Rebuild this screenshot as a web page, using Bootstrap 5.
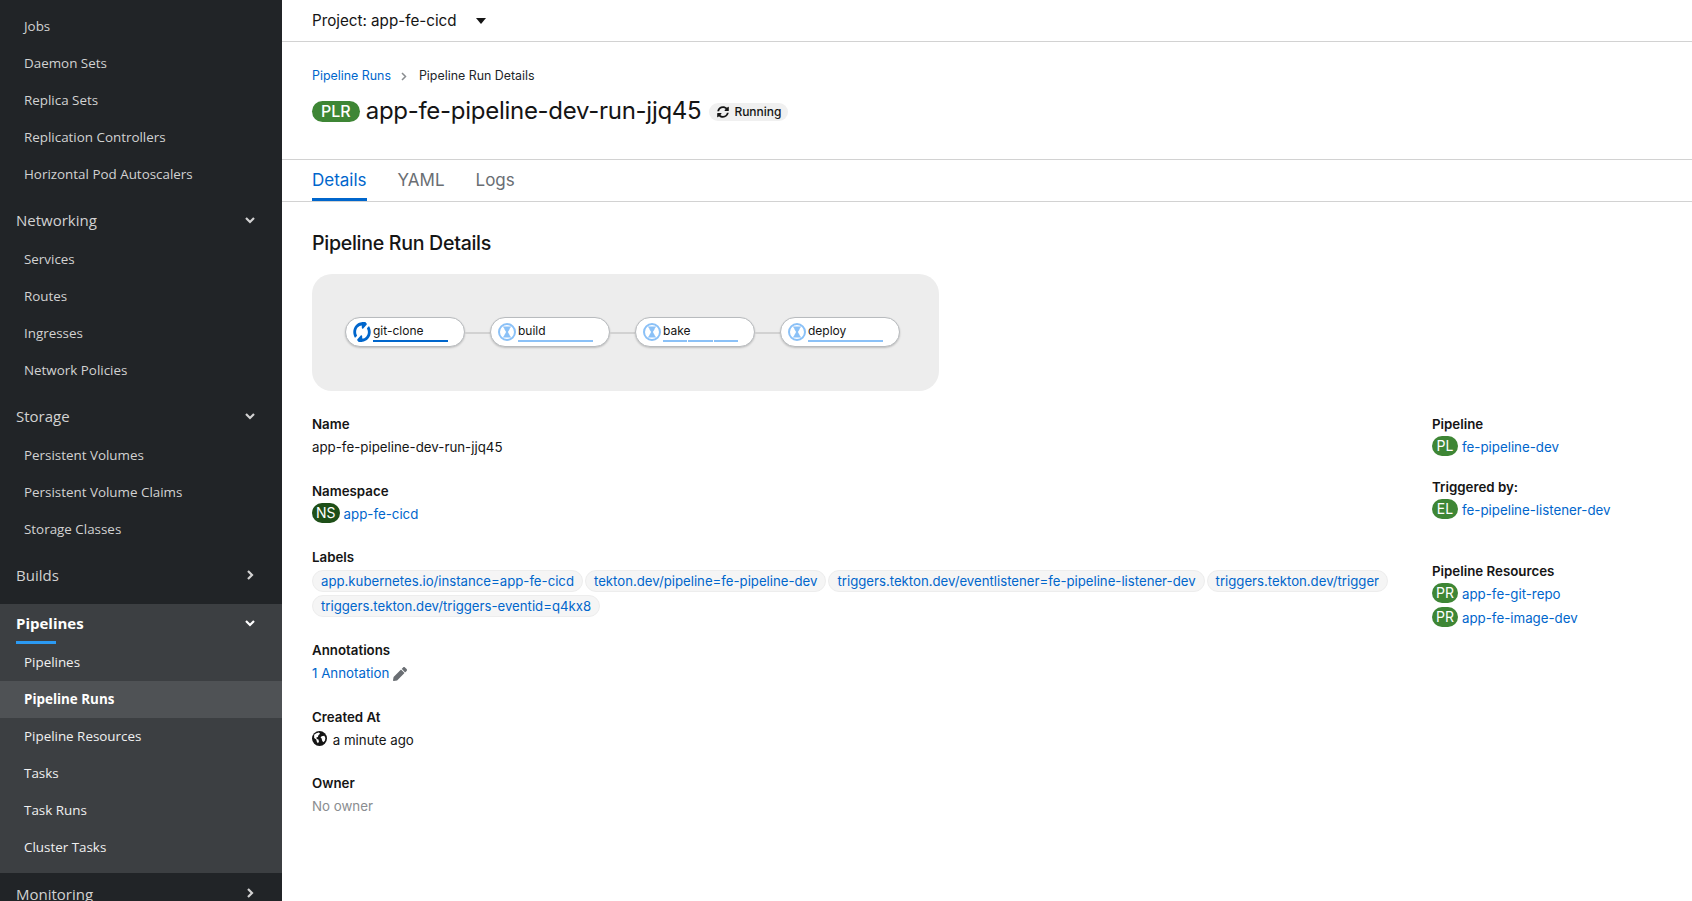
<!DOCTYPE html>
<html lang="en"><head><meta charset="utf-8"><title>Pipeline Run Details</title>
<link href="https://cdn.jsdelivr.net/npm/bootstrap@5.3.0/dist/css/bootstrap.min.css" rel="stylesheet">
<style>
html,body{height:901px;overflow:hidden}
body{font-family:"Inter","Liberation Sans",sans-serif;font-size:13.3px;color:#151515;background:#fff}
a{color:#06c;text-decoration:none}
.shell{height:901px}
.side{width:282px;flex:none;background:#212427;color:#d2d2d2;font-family:"Open Sans","Liberation Sans",sans-serif;overflow:hidden;height:901px;padding-top:8px}
.side-item{display:block;height:37px;line-height:37px;padding-left:24px;font-size:13.4px;color:#d2d2d2}
.side-head{display:flex;justify-content:space-between;align-items:center;padding:0 26px 0 16px;font-size:15px;color:#d2d2d2}
.side-head svg{margin-top:-2px}
.h-net{height:48px;padding-top:7px;padding-bottom:0}
.h-end{height:42px;padding-top:0}
.group-on{background:#3c3f42;padding-bottom:7.5px;margin-top:7.5px}
.group-on .side-item{color:#f0f0f0}
.group-on .side-head{color:#fff;font-weight:700;height:40px}
.rule-on{width:40px;height:3px;background:#2b9af3;margin:-3px 0 0 16px}
.side-item.is-on{background:#4f5255;color:#fff;font-weight:700}
.main{flex:1;min-width:0}
.proj{height:42px;border-bottom:1px solid #d2d2d2;padding:1px 30px 0;font-size:15.2px;gap:19px}
.crumb{margin:0;padding:15px 30px 0;font-size:12.4px;height:54px;align-items:center}
.crumb .breadcrumb-item+.breadcrumb-item::before{content:none}
.crumb .breadcrumb-item+.breadcrumb-item{padding-left:12px}
.sep{color:#8a8d90;margin-left:10px}
.ttl{padding:0 30px;height:63px;gap:6px}
.ttl-text{font-size:24px;line-height:30px;margin:0;font-weight:400;letter-spacing:-.28px}
.plr{background:#3e8635;border-radius:20px;color:#fff;font-size:16px;line-height:21px;padding:0 9px;font-weight:500;margin-top:5px}
.state{background:#f0f0f0;border-radius:12px;font-size:12px;font-weight:500;height:18px;padding:0 7px 0 8px;gap:5px;margin:7px 0 0 2px}
.tabbar{border-top:1px solid #d2d2d2;border-bottom:1px solid #d2d2d2;height:43px;padding:0 30px;gap:31px}
.tabbar .nav-link{padding:0;border:0;font-size:17px;line-height:40px;height:41px;color:#6a6e73}
.tabbar .nav-link.active{color:#06c;border-bottom:3px solid #06c;background:none}
.body-wrap{padding:26px 30px 0}
.sect{font-size:19.6px;line-height:30px;margin:0 0 16px;font-weight:500;letter-spacing:-.3px}
.graph{width:627px;height:117px;background:#ededed;border-radius:20px;padding-left:33px;margin-bottom:22px}
.task{width:120px;height:30px;background:#fff;border:1px solid #b8bbbe;border-radius:15px;box-shadow:0 1px 2px rgba(0,0,0,.2);padding-left:7px;gap:2px;margin-top:-1px}
.task-main{width:75px;height:23px;font-size:12px;line-height:19px}
.prog{height:2px;gap:1px}
.prog i{flex:1;background:#8bc1f7}
.prog.now i{background:#06c}
.wire{width:25px;height:2px;background:#d2d2d2}
.lcol{width:1120px;flex:none}
.rcol{flex:1}
.lab{font-weight:600;line-height:23px}
.val{line-height:23px;min-height:23px;margin-bottom:20.5px}
.bd{display:inline-block;border-radius:12px;background:#3e8635;color:#fff;font-size:14px;line-height:20px;padding:0 4px;margin-right:4px;vertical-align:1px;min-width:26px;text-align:center}
.bd.dark{background:#1e4f18}
.chips{display:flex;flex-wrap:wrap;gap:3px 2px;margin-bottom:22px;padding-top:1px}
.chip{background:#f5f5f5;border:1px solid #ededed;border-radius:12px;height:22px;line-height:20px;padding:0 8px;white-space:nowrap;font-size:13.2px}
.muted{color:#8a8d90}
.glb{margin-right:2px;vertical-align:-1px}
.rc .val{margin-bottom:17px}
.rc .tight{margin-bottom:1px}
.gap-extra{margin-top:38px}
</style></head><body>
<div class="d-flex shell">
<nav class="side">
<a class="side-item">Jobs</a><a class="side-item">Daemon Sets</a><a class="side-item">Replica Sets</a><a class="side-item">Replication Controllers</a><a class="side-item">Horizontal Pod Autoscalers</a>
<div class="side-head h-net"><span>Networking</span><svg width="12" height="12" viewBox="0 0 12 12"><path d="M2 4l4 4 4-4" fill="none" stroke="#d2d2d2" stroke-width="2.2"/></svg></div>
<a class="side-item">Services</a><a class="side-item">Routes</a><a class="side-item">Ingresses</a><a class="side-item">Network Policies</a>
<div class="side-head h-net"><span>Storage</span><svg width="12" height="12" viewBox="0 0 12 12"><path d="M2 4l4 4 4-4" fill="none" stroke="#d2d2d2" stroke-width="2.2"/></svg></div>
<a class="side-item">Persistent Volumes</a><a class="side-item">Persistent Volume Claims</a><a class="side-item">Storage Classes</a>
<div class="side-head h-net"><span>Builds</span><svg width="12" height="12" viewBox="0 0 12 12"><path d="M4 2l4 4-4 4" fill="none" stroke="#d2d2d2" stroke-width="2.2"/></svg></div>
<div class="group-on">
<div class="side-head"><span>Pipelines</span><svg width="12" height="12" viewBox="0 0 12 12"><path d="M2 4l4 4 4-4" fill="none" stroke="#fff" stroke-width="2.2"/></svg></div>
<div class="rule-on"></div>
<a class="side-item">Pipelines</a><a class="side-item is-on">Pipeline Runs</a><a class="side-item">Pipeline Resources</a><a class="side-item">Tasks</a><a class="side-item">Task Runs</a><a class="side-item">Cluster Tasks</a>
</div>
<div class="side-head h-net h-end"><span>Monitoring</span><svg width="12" height="12" viewBox="0 0 12 12"><path d="M4 2l4 4-4 4" fill="none" stroke="#d2d2d2" stroke-width="2.2"/></svg></div>
</nav>
<main class="main">
<div class="proj d-flex align-items-center"><span>Project: app-fe-cicd</span><svg width="10" height="6" viewBox="0 0 10 6"><path d="M0 0h10L5 6z" fill="#151515"/></svg></div>
<ol class="breadcrumb crumb d-flex"><li class="breadcrumb-item"><a href="#">Pipeline Runs</a><svg class="sep" width="6" height="9" viewBox="0 0 6 9"><path d="M1 1l3.500 3.500L1 8" fill="none" stroke="#8a8d90" stroke-width="1.5"/></svg></li><li class="breadcrumb-item active text-body">Pipeline Run Details</li></ol>
<div class="ttl d-flex align-items-start"><span class="plr">PLR</span><h1 class="ttl-text">app-fe-pipeline-dev-run-jjq45</h1><span class="state d-inline-flex align-items-center"><svg width="12" height="12" viewBox="0 0 512 512"><path fill="#151515" d="M370.72 133.28C339.458 104.008 298.888 87.962 255.848 88c-77.458.068-144.328 53.178-162.791 126.85-1.344 5.363-6.122 9.15-11.651 9.15H24.103c-7.498 0-13.194-6.807-11.807-14.176C33.933 94.924 134.813 8 256 8c66.448 0 126.791 26.136 171.315 68.685L463.03 40.97C478.149 25.851 504 36.559 504 57.941V192c0 13.255-10.745 24-24 24H345.941c-21.382 0-32.09-25.851-16.971-40.971l41.75-41.749zM32 296h134.059c21.382 0 32.09 25.851 16.971 40.971l-41.75 41.75c31.262 29.273 71.835 45.319 114.876 45.28 77.418-.07 144.315-53.144 162.787-126.849 1.344-5.363 6.122-9.15 11.651-9.15h57.304c7.498 0 13.194 6.807 11.807 14.176C478.067 417.076 377.187 504 256 504c-66.448 0-126.791-26.136-171.315-68.685L48.97 471.03C33.851 486.149 8 475.441 8 454.059V320c0-13.255 10.745-24 24-24z"/></svg>Running</span></div>
<ul class="nav tabbar"><li class="nav-item"><a class="nav-link active" href="#">Details</a></li><li class="nav-item"><a class="nav-link" href="#">YAML</a></li><li class="nav-item"><a class="nav-link" href="#">Logs</a></li></ul>
<div class="body-wrap">
<h2 class="sect">Pipeline Run Details</h2>
<div class="graph d-flex align-items-center">
<div class="task d-flex align-items-center"><svg width="18" height="20" viewBox="0 0 512 512" preserveAspectRatio="none"><path transform="rotate(-45 256 256)" fill="#06c" d="M370.72 133.28C339.458 104.008 298.888 87.962 255.848 88c-77.458.068-144.328 53.178-162.791 126.85-1.344 5.363-6.122 9.15-11.651 9.15H24.103c-7.498 0-13.194-6.807-11.807-14.176C33.933 94.924 134.813 8 256 8c66.448 0 126.791 26.136 171.315 68.685L463.03 40.97C478.149 25.851 504 36.559 504 57.941V192c0 13.255-10.745 24-24 24H345.941c-21.382 0-32.09-25.851-16.971-40.971l41.75-41.749zM32 296h134.059c21.382 0 32.09 25.851 16.971 40.971l-41.75 41.75c31.262 29.273 71.835 45.319 114.876 45.28 77.418-.07 144.315-53.144 162.787-126.849 1.344-5.363 6.122-9.15 11.651-9.15h57.304c7.498 0 13.194 6.807 11.807 14.176C478.067 417.076 377.187 504 256 504c-66.448 0-126.791-26.136-171.315-68.685L48.97 471.03C33.851 486.149 8 475.441 8 454.059V320c0-13.255 10.745-24 24-24z"/></svg><div class="task-main"><div>git-clone</div><div class="prog now d-flex"><i></i></div></div></div>
<div class="wire"></div>
<div class="task d-flex align-items-center"><svg width="18" height="18" viewBox="0 0 18 18"><circle cx="9" cy="9" r="8" fill="none" stroke="#8bc1f7" stroke-width="2"/><path fill="#8bc1f7" d="M5 3.500h8v1h-1c0 2-2 3.500-2 4.500s2 2.500 2 4.500h1v1H5v-1h1c0-2 2-3.500 2-4.500S6 6.500 6 4.500H5z"/></svg><div class="task-main"><div>build</div><div class="prog d-flex"><i></i></div></div></div>
<div class="wire"></div>
<div class="task d-flex align-items-center"><svg width="18" height="18" viewBox="0 0 18 18"><circle cx="9" cy="9" r="8" fill="none" stroke="#8bc1f7" stroke-width="2"/><path fill="#8bc1f7" d="M5 3.500h8v1h-1c0 2-2 3.500-2 4.500s2 2.500 2 4.500h1v1H5v-1h1c0-2 2-3.500 2-4.500S6 6.500 6 4.500H5z"/></svg><div class="task-main"><div>bake</div><div class="prog d-flex"><i></i><i></i><i></i></div></div></div>
<div class="wire"></div>
<div class="task d-flex align-items-center"><svg width="18" height="18" viewBox="0 0 18 18"><circle cx="9" cy="9" r="8" fill="none" stroke="#8bc1f7" stroke-width="2"/><path fill="#8bc1f7" d="M5 3.500h8v1h-1c0 2-2 3.500-2 4.500s2 2.500 2 4.500h1v1H5v-1h1c0-2 2-3.500 2-4.500S6 6.500 6 4.500H5z"/></svg><div class="task-main"><div>deploy</div><div class="prog d-flex"><i></i></div></div></div>
</div>
<div class="d-flex">
<div class="lcol">
<div class="lab">Name</div><div class="val">app-fe-pipeline-dev-run-jjq45</div>
<div class="lab">Namespace</div><div class="val"><span class="bd dark">NS</span><a href="#">app-fe-cicd</a></div>
<div class="lab">Labels</div>
<div class="chips"><span class="chip"><a href="#">app.kubernetes.io/instance=app-fe-cicd</a></span><span class="chip"><a href="#">tekton.dev/pipeline=fe-pipeline-dev</a></span><span class="chip"><a href="#">triggers.tekton.dev/eventlistener=fe-pipeline-listener-dev</a></span><span class="chip"><a href="#">triggers.tekton.dev/trigger</a></span><span class="chip"><a href="#">triggers.tekton.dev/triggers-eventid=q4kx8</a></span></div>
<div class="lab">Annotations</div><div class="val"><a href="#">1 Annotation</a> <svg width="14" height="14" viewBox="0 0 512 512"><path fill="#6a6e73" d="M497.9 142.1l-46.1 46.1c-4.7 4.7-12.3 4.7-17 0l-111-111c-4.7-4.7-4.7-12.3 0-17l46.1-46.1c18.7-18.7 49.1-18.7 67.9 0l60.1 60.1c18.8 18.7 18.8 49.1 0 67.900zM284.2 99.8L21.6 362.4.4 483.9c-2.9 16.4 11.4 30.6 27.8 27.8l121.5-21.3 262.6-262.6c4.7-4.7 4.700-12.3 0-17l-111-111c-4.8-4.7-12.400-4.700-17.100 0z"/></svg></div>
<div class="lab">Created At</div><div class="val"><svg class="glb" width="15" height="15" viewBox="0 0 14 14"><circle cx="7" cy="7" r="7" fill="#151515"/><path fill="#fff" d="M2 3.500l2-1.500 2.500-.5 1 1-1.500 1.500-.5 1.500-1.500.5.500 1.500 1.500.5.500 2-1 1.500-1-1.500-.5-2-2-1.500zM9 5l2.500-.5 1 2-.5 2.500-1.500 1.500-1-1.500-.5-2-1-1z"/></svg> a minute ago</div>
<div class="lab">Owner</div><div class="val muted">No owner</div>
</div>
<div class="rcol rc">
<div class="lab">Pipeline</div><div class="val"><span class="bd">PL</span><a href="#">fe-pipeline-dev</a></div>
<div class="lab">Triggered by:</div><div class="val"><span class="bd">EL</span><a href="#">fe-pipeline-listener-dev</a></div>
<div class="lab gap-extra">Pipeline Resources</div><div class="val tight"><span class="bd">PR</span><a href="#">app-fe-git-repo</a></div><div class="val"><span class="bd">PR</span><a href="#">app-fe-image-dev</a></div>
</div>
</div>
</div>
</main>
</div>
</body></html>
